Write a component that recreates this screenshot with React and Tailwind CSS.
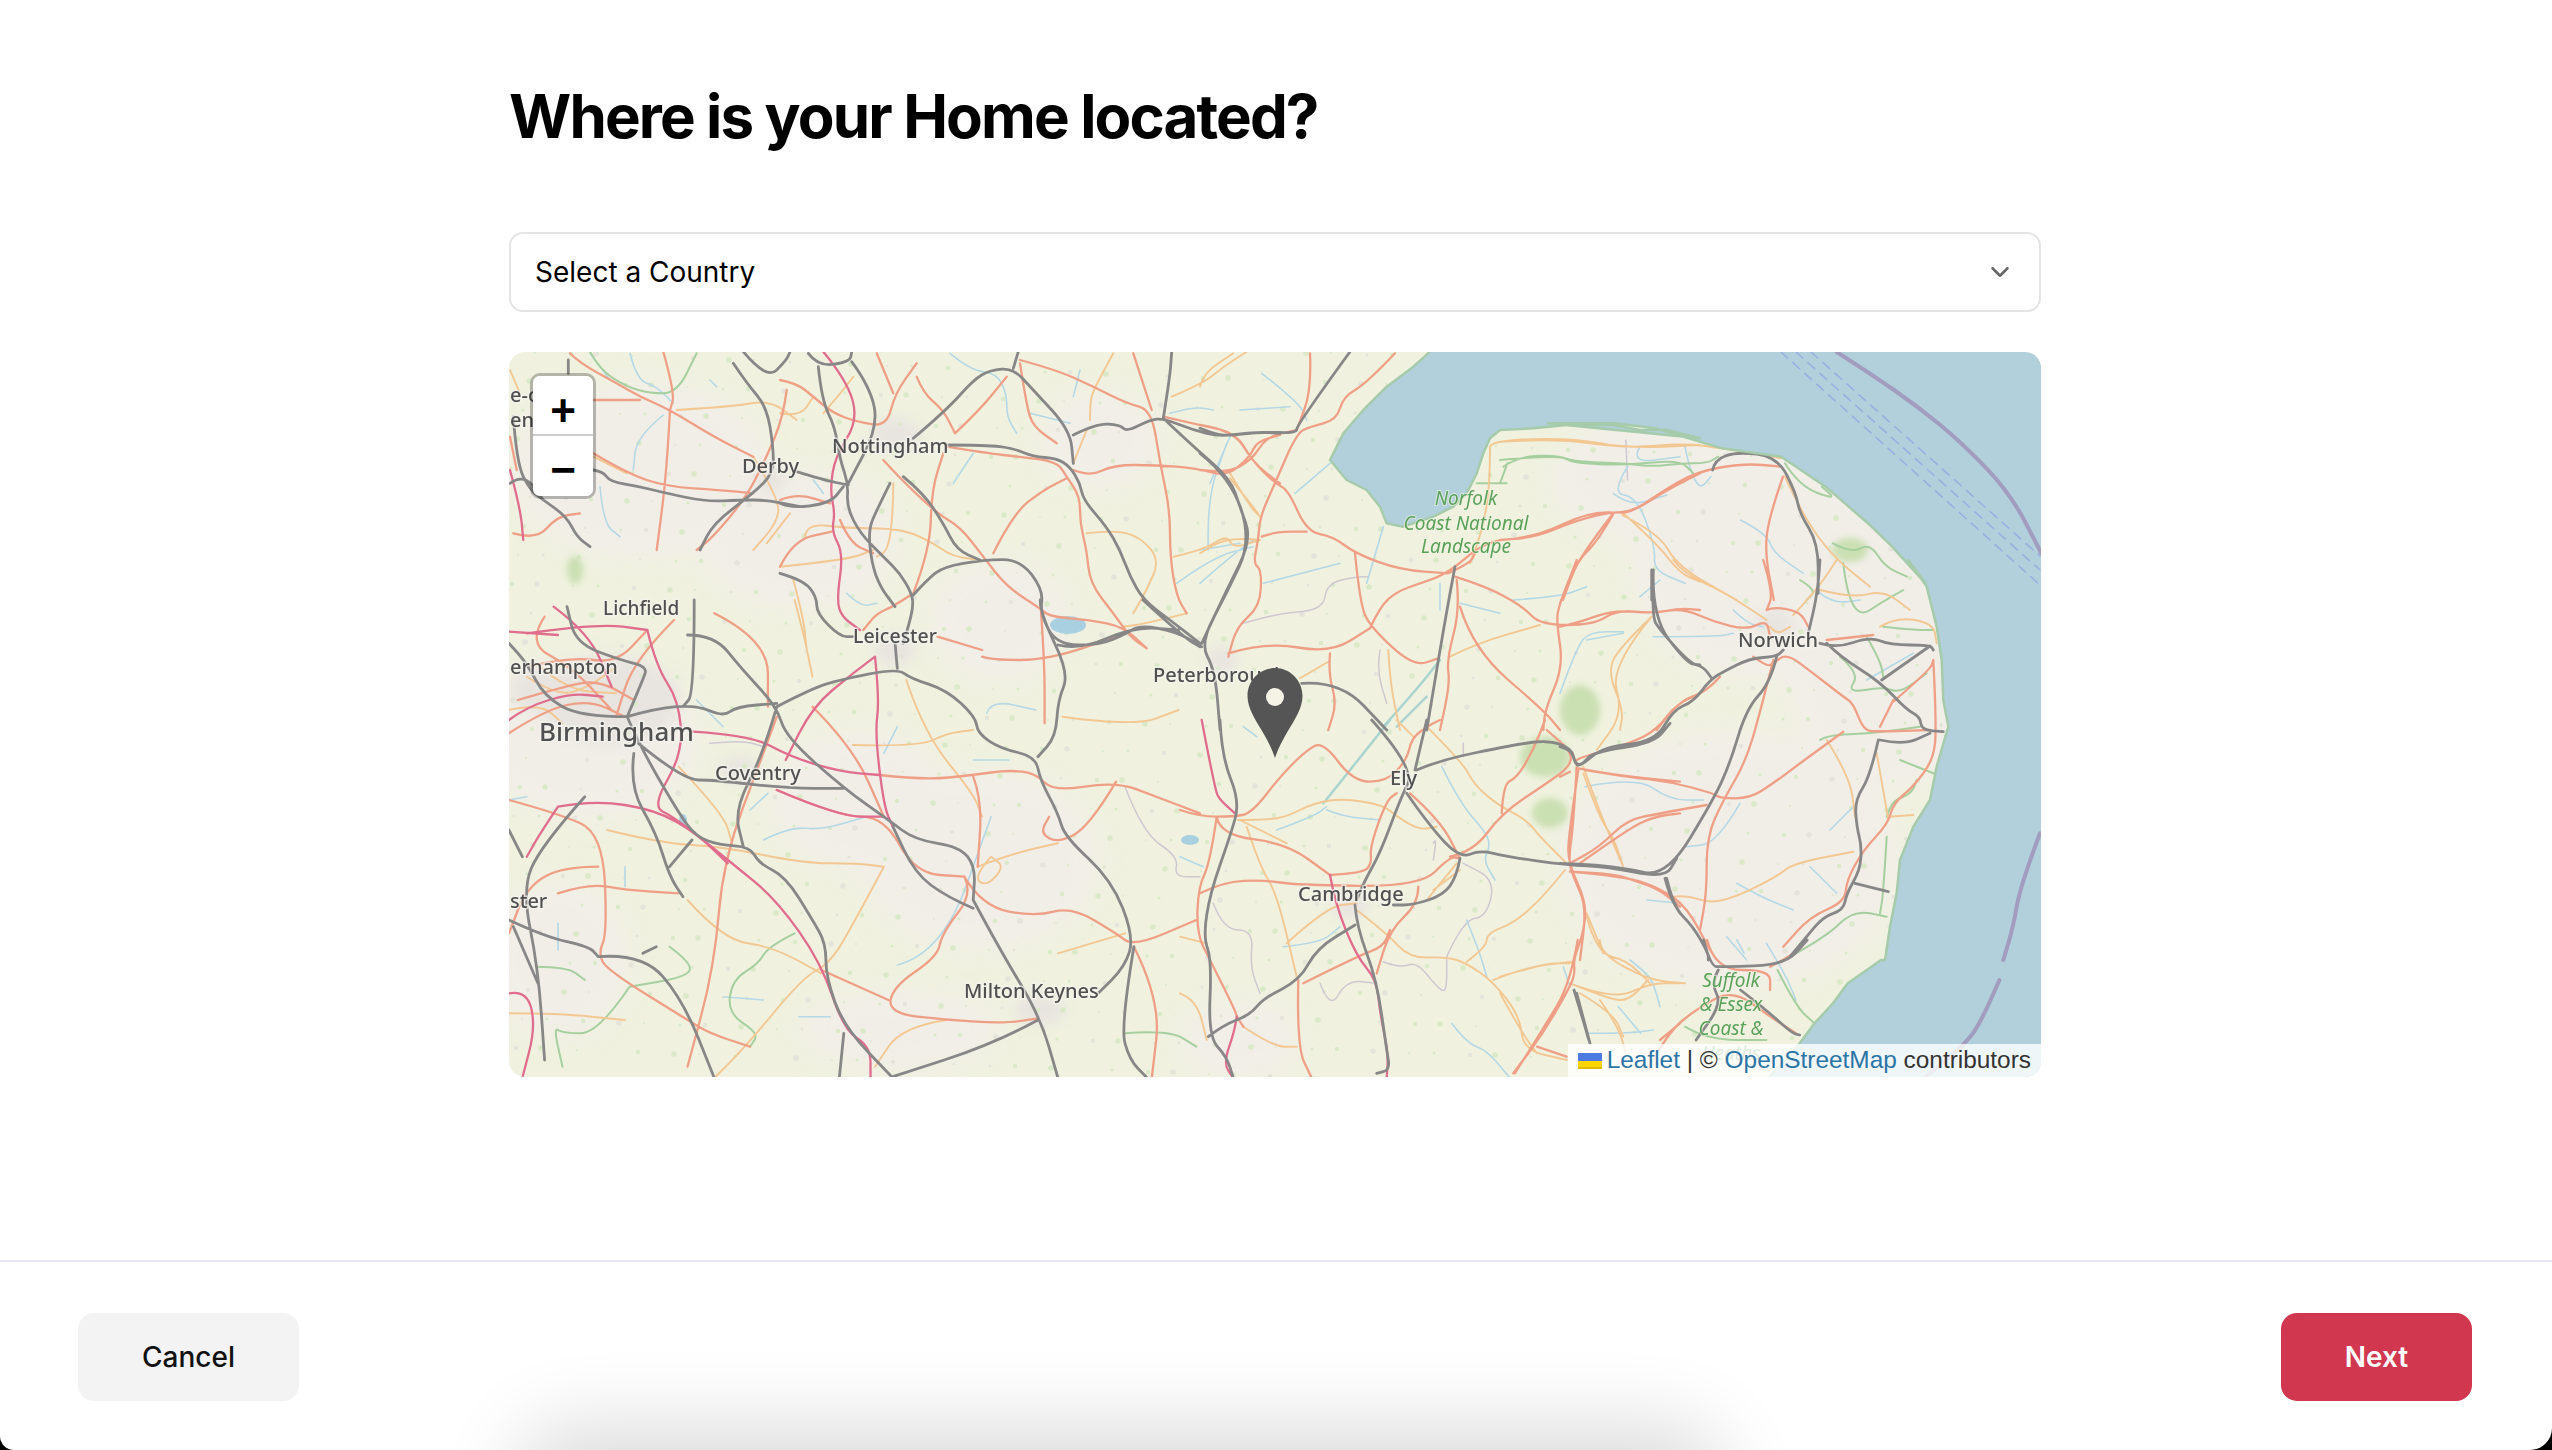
import { ChevronDown } from 'lucide-react';

// Road traces are noted in the coordinates of the crop they were read from,
// then mapped to page pixels (the svg viewBox is in page pixels).
const zones = [
  {
    at: [500, 350, 3, 3],
    water: ['270,10 330,90', '390,10 410,90 470,110 520,160', '490,195 410,260 400,360', '300,410 310,520 360,560', '630,90 650,110'],
    orange: ['530,180 700,170 810,150 890,210', '280,320 380,370', '760,320 840,450 830,520 760,600', '30,60 60,130', '800,580 870,490'],
    red: ['210,10 240,40 350,100 420,140 510,180 640,260 760,320', '510,180 500,370 470,600', '280,150 420,150', '280,310 380,370 500,410 660,420 760,430', '490,5 525,130 510,180', '30,260 50,360', '40,550 110,570 170,500 240,490', '860,120 850,200 800,320 740,440 640,560 590,600'],
    pink: ['30,360 60,470 70,570'],
    grey: ['700,40 740,100 800,170 820,290 820,370 760,430 640,520 600,600', '280,360 310,365 330,395 420,410 500,430 620,455 720,450 800,450 900,470', '730,5 800,90 860,30 870,5', '40,200 50,340 90,420 130,450 200,500 230,560 270,590', '30,400 70,370 130,450', '205,30 205,70'],
    green: ['270,5 300,60 380,110 450,130 530,130 590,10'],
  },
  {
    at: [780, 350, 3, 3],
    water: ['520,400 580,310', '510,10 570,60 650,70 680,130 680,200 710,250', '750,190 870,220', '880,140 900,60', '1170,190 1240,170 1300,180', '1285,600 1280,450 1340,280', '1190,700 1300,620 1420,590', '1260,700 1350,620 1420,570', '200,730 240,770 290,760', '100,390 130,430'],
    orange: ['75,560 80,520 200,535 330,535 400,550 460,580 520,620 600,630', '0,650 200,630 280,600', '340,400 340,480 325,600 290,620', '920,550 1000,540 1080,560 1140,630 1100,720 1060,790', '1180,620 1270,600 1340,555 1360,595 1440,570', '930,210 930,160 940,120 1000,10', '1175,140 1270,100 1330,50 1400,5', '880,340 920,240', '1220,790 1100,820 1030,830', '0,190 60,200 100,140', '220,80 190,120 130,190', '40,690 70,800 80,900', '1350,385 1420,470 1440,500'],
    red: ['500,290 620,310 720,320 830,335 860,380 900,440 900,520 920,600 930,700 1000,790 1050,860 1100,895', '0,650 40,570 155,545', '400,730 450,600 455,420 490,310', '525,250 600,180 680,80', '410,80 430,130 490,180 525,250', '310,330 350,375 470,490 540,530 610,620 680,710 780,775 810,800 930,810 1030,830 1100,895', '640,610 700,490 790,420 860,385', '880,360 930,380 1000,345 1130,345 1250,355 1340,380 1410,320 1430,275 1500,255', '720,40 740,170 760,230 830,280', '720,30 830,60 940,110 1040,160 1115,180 1140,340 1170,480 1170,620 1190,740 1220,790', '1060,10 1115,180', '1150,200 1280,230 1370,250 1420,340 1500,400', '400,730 340,770 290,790 250,840', '0,90 50,100 100,140 160,190 230,215 320,230 345,130 410,40', '290,10 340,130', '180,510 210,580 280,610', '0,450 50,430 150,460'],
    pink: ['130,5 200,90 235,210 165,320 150,420 165,490 155,545 190,610 170,750 185,800 240,840'],
    grey: ['115,50 125,150 165,230 180,330 205,400 200,470 240,550 310,620 360,670 395,730 400,770 385,830 370,880', '500,285 620,285 700,295 760,320 830,325 870,350 900,400 910,450 980,530 1020,600 1050,680 1090,750 1170,810 1260,880', '400,265 500,180 580,90 630,60 700,55 760,120 870,240 880,340', '880,255 950,220 1020,225 1040,245 1110,210 1150,205 1240,240 1320,260 1430,245 1500,250', '1150,205 1170,80 1175,5', '1150,205 1240,290 1350,385 1380,470 1415,570 1340,720 1265,880', '700,55 715,5', '0,460 30,475 150,460 190,410', '50,365 130,390 205,405', '400,735 440,690 490,650 610,630 720,628 790,720 780,790 830,885 960,885 1040,850 1080,825 1190,845 1265,890', '370,380 430,430 490,520 530,600 600,630', '330,400 290,480 265,540 275,640 300,710 345,770', '85,10 115,50 210,35 215,5', '0,670 70,690 110,740 110,790 180,860 220,860', '215,35 270,110 295,230 205,400'],
  },
  {
    at: [500, 600, 2.24, 3],
    water: ['1090,340 1100,300 1200,330', '890,380 860,460', '1060,480 1140,480', '590,720 650,680 720,690 820,650', '890,1095 990,1060 1100,650', '130,970 130,1050', '280,800 280,860', '500,1190 590,1200', '670,1250 740,1250', '20,600 60,590', '440,300 500,380', '560,630 600,580'],
    orange: ['660,0 680,100 700,230', '910,240 950,400 1060,580 1080,650', '790,435 940,440 1000,400 1060,390', '240,690 360,730 500,740 680,790 800,790 860,800', '860,800 800,950 740,1090 680,1130 550,1340 480,1434', '420,900 500,1020 610,1040 720,1120', '1000,1260 900,1280 840,1400', '1070,800 1150,760 1250,730', '1250,1060 1400,1000', '1260,350 1420,380 1520,330', '20,1240 130,1240 280,1260', '90,200 150,270 260,280', '400,500 500,640 520,730', '1100,770 1060,830 1090,860 1130,800 1100,770', '60,230 130,290 200,260 260,200', '20,330 90,310 140,370'],
    red: ['850,525 950,540 1060,525 1140,510 1200,520 1240,575 1380,545 1470,590 1568,640', '620,570 760,650 860,650 930,820 1040,830', '1040,830 1060,880 990,1000 980,1070 880,1160 870,1240 1000,1260 1130,1270 1205,1255', '1380,545 1320,680 1250,730 1210,700 1230,650', '1040,830 1080,920 1200,950 1280,920 1380,1000 1420,1040 1560,960', '620,350 590,460 500,780 480,1100 420,1400', '130,880 200,850 280,870 400,880', '20,600 130,640 230,700 240,1000 220,1060 240,1110 420,1260 470,1300 560,1340', '720,1110 870,1200', '1060,530 1080,600 1070,800', '1210,0 1220,180 1220,370', '1080,170 1100,180 1230,180 1400,100', '980,110 1080,150', '700,320 790,440 860,650', '480,40 600,120 600,320', '20,400 100,330 200,300 280,350', '100,50 60,130 160,200 250,330', '390,60 300,180 260,350', '1420,1040 1480,1200 1460,1434', '220,800 140,800 60,860 20,1000', '60,200 160,170 260,190 330,90', '40,300 140,260 220,240 300,300'],
    pink: ['330,90 350,200 400,300 410,460 340,620 390,650 520,790 620,900 720,1090 770,1290 830,1340 830,1434', '840,170 790,220 700,320 640,480', '840,170 850,300 840,400 860,620 880,680', '430,395 560,405 650,470 760,515 850,525', '60,100 220,70 330,90', '130,620 210,600 350,630 440,700 510,790', '20,95 130,105', '130,620 90,700 60,770', '20,1180 60,1170 80,1280 50,1434', '620,570 760,650 860,650', '20,360 60,320 160,280 230,290', '120,20 200,100 250,260'],
    grey: ['420,105 480,105 540,205 620,320 640,410 770,565 870,660 930,720 1030,740 1065,800 1060,900', '620,320 700,265 760,240 890,205 920,235 1000,270 1065,350 1070,400 1120,445 1200,470 1210,540 1250,640 1265,710 1370,840 1420,1010 1400,1100 1340,1180', '1440,0 1530,110 1568,140', '285,350 350,325 440,315 500,350 530,320 620,310', '1210,0 1210,40 1275,220 1250,300 1245,410 1205,470', '1250,135 1300,150 1420,80 1520,90', '890,205 885,130', '285,350 310,430 400,640 440,710 490,735 560,740 580,790 640,830 700,960 730,1030 730,1130 770,1280 880,1434', '310,430 410,540 480,540 640,565 770,565', '285,350 180,350 100,290 60,190 20,130', '285,350 320,240 330,200 270,180 170,130 150,20', '435,0 435,280 410,320', '300,460 290,560 350,700 380,830 410,890', '430,720 380,800', '190,590 90,740 50,870 85,1100 100,1380', '220,1070 320,1060 410,1200 480,1434', '20,960 100,1010 200,1040 220,1070', '320,1060 350,1040', '1060,900 1120,1050 1210,1250 1250,1434', '1205,1260 1110,1330 880,1430', '620,320 590,460 525,630 545,740', '1060,925 1000,890 930,820 880,680', '1420,1040 1390,1280 1410,1380 1450,1434', '760,1434 770,1300', '20,690 50,770', '30,980 85,1150'],
    green: ['660,1000 600,1040 580,1090 520,1140 510,1240 580,1300 560,1340', '290,1160 220,1300 140,1300 120,1280 140,1400', '80,1100 150,1100 190,1140', '380,1040 430,1090 420,1130 290,1160', '1400,1300 1500,1290 1560,1340'],
    bound: ['1400,560 1440,700 1520,770 1510,830 1568,830', '470,430 540,420 590,440'],
  },
  {
    at: [1200, 350, 3, 3],
    water: ['185,70 300,160 320,210', '120,180 270,170', '30,400 90,260', '285,430 390,340', '500,700 550,530', '190,700 420,640', '0,600 120,580', '1240,430 1290,470 1400,435', '720,780 720,700', '780,760 900,790', '940,750 1080,740 1160,710', '1160,870 1270,850', '1320,290 1290,340 1440,320'],
    orange: ['180,570 85,560 0,610', '90,370 150,470 180,500', '750,920 830,880 1020,825', '870,290 880,270 1120,265 1280,295 1500,285', '565,900 570,1000 600,1140', '300,985 385,935', '1270,490 1370,580 1440,670 1500,695', '1355,800 1250,900 1225,970 1270,1080 1260,1140', '0,110 10,70 100,10', '870,290 870,400 850,530 810,640'],
    red: ['585,10 500,100 430,140 410,210 330,230 290,250 225,400 180,500 175,570 160,640 185,660 180,770 110,830 85,920', '0,225 100,240 155,330 225,400 265,420 320,545 400,560 465,610 600,660 745,670', '0,360 80,370 155,330 200,260 290,240', '185,560 225,545 320,545', '465,610 480,760 510,830 640,950 715,925', '85,910 200,875 390,910 510,835', '390,910 385,970 410,1060 385,1140', '510,835 540,770 590,725 660,700 745,670 860,570 1000,565 1130,510 1240,485 1290,490 1400,420 1500,370', '1240,490 1130,630 1075,770 1070,820 1090,950 1035,1080 1030,1140', '765,680 860,710 970,770 1020,825 1180,825 1250,780 1360,790 1440,775 1500,780', '770,690 780,780 740,930 750,1000 720,1140', '780,770 820,900 1030,1080 1080,1140', '745,670 810,640 825,610', '1370,1140 1430,1060 1500,1030', '330,10 335,120 290,240'],
    grey: ['450,5 290,225 290,250 180,245 70,260 0,235', '0,310 90,380 155,570 80,730 0,880 45,960 60,1140', '765,650 740,780 680,1140', '305,1000 420,992 560,1140', '1360,660 1355,800 1460,940 1500,945'],
    green: ['920,400 830,400', '910,350 950,320 1080,315 1120,340 1280,345 1440,330 1480,370'],
    bound: ['130,820 230,790 370,780 380,700 470,680 505,680', '540,900 530,960 560,1060'],
    canal: ['550,1130 640,1030 720,930', '590,1130 680,1040'],
  },
  {
    at: [1500, 200, 2.703, 3],
    water: ['345,800 300,880 370,890 420,1040 415,1110 500,1150', '650,960 720,1000 740,1060 820,1120', '500,740 510,800 540,870 570,830'],
    orange: ['0,725 150,715 340,745 500,730 600,745 760,775', '330,945 430,1000 480,1100 640,1200', '770,830 820,950 900,1070 1000,1160'],
    red: ['0,1020 90,1015 240,935 355,940 430,880 530,815 660,790 760,800', '765,830 730,940 715,1050 740,1200', '305,945 260,1030 210,1080 170,1200'],
    grey: ['575,810 580,780 640,755 750,770 800,880 810,940 860,1030 860,1180', '410,1110 410,1200'],
    green: ['0,780 150,765 200,785 340,790 410,800 490,790 560,790 590,770', '0,850 20,790', '770,790 810,860 910,900 870,860', '900,1030 950,1060 1000,1030 1040,1100 1100,1130'],
    bound: ['340,720 345,840'],
  },
  {
    at: [1180, 720, 3, 3],
    water: ['290,330 400,290 440,260', '440,270 490,290 600,300', '310,680 420,670 480,620', '785,140 840,250 920,340 930,380 910,420 945,480', '860,600 900,700 920,770', '1150,740 1170,800', '1350,720 1400,760 1420,790 1440,860', '815,910 860,970 920,990 990,1074', '1220,940 1340,940 1420,930', '1400,540 1500,550', '0,410 70,440', '190,20 230,50'],
    orange: ['175,300 260,300 320,290 400,250 490,235 610,255 650,290 720,330 770,320', '180,300 320,370', '200,320 240,440 290,520 350,770', '320,670 440,560 530,550', '530,570 620,640 690,715 800,710 860,730 940,785 1020,890 1030,990 1160,1020', '860,725 920,680 920,640 1000,610 1080,540 1155,450', '940,780 1040,740 1180,725', '1170,790 1300,840 1410,790 1500,790', '1210,160 1260,300 1300,350 1330,440', '1220,590 1250,700 1340,720 1410,790', '740,20 850,130 880,190 945,250 1040,300 1080,350 1160,430', '760,510 840,450', '740,540 830,430', '1200,820 1300,880 1330,950', '0,650 80,670', '0,820 50,840 80,960', '190,920 280,980 350,980', '650,0 700,50'],
    red: ['0,270 60,290 160,290 215,280 300,170 380,90 430,65 520,185 620,185 680,120 695,55 740,20 780,0', '110,290 120,345 320,370 450,465', '110,290 90,430 55,500 50,640 90,720 165,870 170,890 190,920', '60,520 130,485 250,480 350,495 720,500 810,410 840,415', '450,465 550,460 575,430 570,380 620,240 650,220', '715,500 715,550 630,630 590,760', '370,790 530,710 610,680 630,630', '355,780 350,980 395,1074', '810,410 880,395 965,280 1100,190 1170,140 1175,95 1100,30', '965,280 970,190 1010,175 1060,90 1095,0', '1195,150 1165,350 1165,430 1220,550 1210,640 1180,720 1185,760 1170,800 1090,940 1000,1060', '1170,455 1290,460 1360,480 1440,510 1500,560', '1195,145 1300,165 1500,185', '1200,430 1340,330 1420,290 1500,280', '690,220 780,300 840,415', '1440,960 1500,910'],
    pink: ['65,0 105,210 120,240 165,280', '450,465 465,550 530,710 590,780 600,880 625,1000 620,1074', '170,890 165,930 130,1030 160,1074'],
    grey: ['120,0 125,110 180,245 150,350 90,520 70,650 95,720 85,950 140,1010 160,1074', '85,950 130,915 210,885 250,835 360,780 410,685 525,615', '525,555 530,620 590,780 620,990 630,1050 590,1060', '710,150 780,120 1000,75 1105,60 1175,85 1185,130 1205,135 1240,95 1420,70 1470,10', '575,0 705,145 660,240 600,400 555,480 530,540', '740,0 705,150', '680,220 750,320 840,415 900,390 980,410 1160,435 1280,440 1455,475 1490,415', '1455,475 1470,530 1500,580', '840,415 830,470 790,525 700,555 640,555', '1190,820 1230,970'],
    bound: ['850,70 850,110', '100,550 130,630 220,630 210,740 240,820', '420,790 450,870 500,780 590,790', '610,725 660,745 710,725 770,800 800,820 800,710', '800,710 850,600 920,590 945,480 850,430', '760,370 770,350 760,420'],
    canal: ['630,0 510,150 430,250'],
  },
  {
    at: [1560, 560, 3, 3],
    water: ['0,400 50,260 90,215 190,215', '240,110 300,60', '520,150 560,190 610,200', '540,730 470,850 380,860', '810,810 880,740', '280,230 470,230 520,220', '75,680 230,650 330,720 430,720', '750,920 830,1000', '530,970 600,1010 700,1050', '500,1130 560,1200', '780,100 820,130 900,120', '920,360 1060,280'],
    orange: ['340,0 370,40 500,100 620,180', '275,170 150,320 190,460 110,570', '70,620 120,760 190,920', '800,540 870,650 885,770', '950,580 980,750 985,780', '985,770 1060,765', '340,1010 380,1005 450,1030 530,1010 650,950 700,910 880,875', '80,1060 130,1180', '700,165 770,90 830,0', '780,90 880,115 970,90 1050,150', '960,200 1010,170 1120,190 1130,250', '630,200 650,225 690,200'],
    red: ['0,200 50,190 160,150 270,160 370,145 460,185 560,210 620,180 630,230', '620,150 640,140 720,155 745,200', '610,0 640,100 620,150', '580,290 620,320 640,310 680,280 760,340 850,410 880,430 910,510 950,515 1110,510', '480,350 440,395 350,430 290,510 210,550 70,590 50,600', '640,300 610,420 560,600 490,720 440,830 440,1000 420,1110', '75,630 200,650 330,665 460,700 480,715 570,715 640,670 720,610 850,515', '440,735 300,760 200,780 120,860 30,910', '50,620 40,800 25,900 40,950 80,1040 60,1200', '30,935 200,950 300,985 380,1040 450,1170', '0,650 30,635', '1000,420 960,500', '1000,425 1110,330 1120,300', '1120,300 1130,500 1120,600 1060,680 1000,730 985,790 910,870 860,960 855,1025 750,1070 670,1160', '50,0 0,130', '800,240 940,225'],
    green: ['720,60 770,90 740,120', '850,10 860,100 900,170 960,130 1030,90', '920,230 960,300 970,350', '840,290 900,340 860,400 970,380 1020,400 1100,340', '780,540 800,525 940,520 1080,500', '1020,600 1120,640', '980,830 970,1000 960,1060', '690,1190 800,1130 880,1050 980,1070', '970,200 1060,210 1120,210', '1070,660 1060,700 1000,720 980,770'],
    grey: ['0,560 35,570 45,610 60,620 130,560 285,545 340,450 400,425 450,360 490,335 570,295 650,290 670,270', '280,30 275,170 300,210 390,310 430,320 455,355', '780,0 775,90 745,220', '650,290 630,370 560,445 510,610 460,720 320,950 190,925 110,915 0,910', '320,955 340,1040 400,1100 445,1180 445,1200', '780,250 830,265 930,230 990,255 1110,255 1120,270', '1110,258 965,360', '800,250 840,290 960,365 1040,450 1080,470 1085,510 1150,515', '960,540 1030,555 1110,520', '955,540 930,650 885,720 890,800 905,860 900,930 860,1000 850,1050 790,1070 740,1130 690,1190', '885,970 985,995'],
  },
  {
    at: [1500, 940, 2.703, 3],
    water: ['720,10 770,100 800,180', '640,0 660,40', '320,200 380,280'],
    orange: ['0,110 120,70 190,70', '270,0 270,40 400,120 500,130', '190,130 300,180 350,180 400,120', '0,160 60,280 100,340', '270,180 320,260 340,340'],
    red: ['210,0 190,130 120,260 40,400', '560,0 580,90 730,90 730,150', '730,80 800,40 830,0', '400,390 450,280 540,200 630,150 730,230 800,280', '100,320 180,350'],
    grey: ['550,0 570,80 600,80 770,75 830,0', '200,150 230,260 240,300', '650,150 720,210 790,280 810,285', '590,90 570,130 600,190 530,300'],
    green: ['750,90 800,200 850,250', '500,260 560,300 720,300'],
  },
];

function toPoints(trace, [ox, oy, sx, sy]) {
  return trace.split(' ').map((pair) => {
    const [x, y] = pair.split(',').map(Number);
    return [ox + x / sx, oy + y / sy];
  });
}

// quadratic through the midpoints, roads look less like a polygon this way
function smooth(pts) {
  let d = `M${pts[0][0].toFixed(1)} ${pts[0][1].toFixed(1)}`;
  for (let i = 1; i < pts.length - 1; i++) {
    const mx = (pts[i][0] + pts[i + 1][0]) / 2;
    const my = (pts[i][1] + pts[i + 1][1]) / 2;
    d += `Q${pts[i][0].toFixed(1)} ${pts[i][1].toFixed(1)} ${mx.toFixed(1)} ${my.toFixed(1)}`;
  }
  const last = pts[pts.length - 1];
  return `${d}L${last[0].toFixed(1)} ${last[1].toFixed(1)}`;
}

function layer(name) {
  return zones.flatMap((z) => (z[name] || []).map((t) => smooth(toPoints(t, z.at)))).join('');
}

const coastZones = [
  [[1200, 350, 3, 3], '690,5 640,50 560,110 490,180 430,250 390,330 440,390 500,420 540,470 560,520 610,530 700,500 760,470 800,430 830,370 850,310 870,265 900,240 1000,235 1100,225 1240,225 1320,240 1400,240 1500,265'],
  [[1500, 200, 2.703, 3], '130,670 310,670 420,685 600,745 760,770 880,860 1000,975 1060,1040 1150,1150'],
  [[1560, 560, 3, 3], '1045,0 1100,80 1130,200 1145,300 1150,420 1165,500 1130,620 1110,720 1060,800 1020,900 1010,1000 990,1100 975,1200'],
  [[1500, 940, 2.703, 3], '1030,60 940,130 900,190 850,250 810,310 720,420'],
];
const coast = coastZones.flatMap(([at, t]) => toPoints(t, at));
const coastLine = coast.map((p) => p.join(',')).join(' ');
const sea = `${coastLine} 2041,1077 2041,352`;

const shippingLane = [
  [[1500, 200, 2.703, 3], '910,456 1000,520 1130,620 1250,730 1380,880 1463,1060'],
  [[1560, 560, 3, 3], '1440,820 1380,980 1360,1100 1330,1200'],
  [[1500, 940, 2.703, 3], '1350,120 1300,250 1250,320 1150,410'],
].map(([at, t]) => smooth(toPoints(t, at))).join('');

// fixed pseudo random so the field speckle is the same on every load
const specks = Array.from({ length: 1100 }, (_, i) => ({
  x: 510 + ((i * 7919) % 1531),
  y: 352 + ((i * 104729) % 725),
  r: 1 + (i % 4) * 0.6,
}));

const grayPatches = [
  [1760, 560, 130, 120], [1890, 640, 110, 150], [1730, 860, 170, 130], [1640, 480, 90, 60],
  [640, 470, 130, 90], [590, 740, 110, 80], [980, 860, 120, 90], [1100, 440, 60, 50],
  [860, 800, 90, 70], [1000, 620, 70, 60], [560, 960, 70, 80], [1240, 1040, 60, 40],
  [800, 540, 100, 70], [900, 1030, 100, 40],
];

const cities = [
  [610, 700, 70, 45], [540, 690, 30, 25], [895, 435, 25, 18], [895, 650, 22, 16], [740, 770, 20, 14],
  [1222, 660, 16, 14], [1775, 625, 18, 16], [1350, 905, 18, 14], [770, 480, 16, 14], [1040, 1010, 26, 16],
];

const greenPatches = [
  [1545, 757, 25, 20], [1550, 813, 18, 15], [1580, 710, 20, 25], [575, 570, 8, 14], [1850, 550, 18, 12],
];

const lakes = [
  [1068, 625, 18, 9], [1190, 840, 9, 5], [683, 820, 4, 6],
];

const labels = [
  { t: 'e-o', x: 510, y: 402, s: 20 },
  { t: 'ent', x: 510, y: 427, s: 20 },
  { t: 'Nottingham', x: 832, y: 453, s: 20 },
  { t: 'Derby', x: 742, y: 473, s: 20 },
  { t: 'Lichfield', x: 603, y: 615, s: 19 },
  { t: 'Leicester', x: 853, y: 643, s: 19.5 },
  { t: 'erhampton', x: 510, y: 674, s: 20 },
  { t: 'Birmingham', x: 539, y: 741, s: 26 },
  { t: 'Coventry', x: 715, y: 780, s: 20 },
  { t: 'ster', x: 510, y: 908, s: 20 },
  { t: 'Milton Keynes', x: 964, y: 998, s: 20 },
  { t: 'Peterborough', x: 1153, y: 682, s: 20 },
  { t: 'Ely', x: 1390, y: 785, s: 20 },
  { t: 'Cambridge', x: 1298, y: 901, s: 20 },
  { t: 'Norwich', x: 1738, y: 647, s: 20 },
];

const parkLabels = [
  { t: 'Norfolk', x: 1466, y: 505 },
  { t: 'Coast National', x: 1466, y: 530 },
  { t: 'Landscape', x: 1466, y: 553 },
  { t: 'Suffolk', x: 1731, y: 987 },
  { t: '& Essex', x: 1731, y: 1011 },
  { t: 'Coast &', x: 1731, y: 1035 },
  { t: 'Heaths', x: 1731, y: 1060 },
];

function MapDrawing() {
  return (
    <svg viewBox="509 352 1532 725" className="block w-full h-full bg-[#f0f2df]">
      <g className="blur-[14px]">
        {grayPatches.map(([x, y, w, h], i) => (
          <ellipse key={i} cx={x} cy={y} rx={w} ry={h} fill="#f1eee8" />
        ))}
      </g>
      <g className="blur-[6px]">
        {cities.map(([x, y, w, h], i) => (
          <ellipse key={i} cx={x} cy={y} rx={w} ry={h} fill="#e8e5e0" />
        ))}
      </g>
      <g className="blur-[0.6px]">
        {specks.map((p, i) => (
          <circle key={i} cx={p.x} cy={p.y} r={p.r} fill={i % 3 === 0 ? '#e4e4da' : '#dae9c8'} />
        ))}
      </g>
      <g className="blur-[3px]">
        {greenPatches.map(([x, y, w, h], i) => (
          <ellipse key={i} cx={x} cy={y} rx={w} ry={h} fill="#cadfb2" />
        ))}
      </g>
      <g className="blur-[0.7px]" fill="none" strokeLinejoin="round" strokeLinecap="round">
        <path d={layer('bound')} stroke="#cfc8d2" strokeWidth="1.5" />
        <path d={layer('water')} stroke="#b4d8e6" strokeWidth="1.6" />
        <path d={layer('canal')} stroke="#a9d4cf" strokeWidth="2.5" />
        {lakes.map(([x, y, w, h], i) => (
          <ellipse key={i} cx={x} cy={y} rx={w} ry={h} fill="#a9d0e0" />
        ))}
        <path d={layer('green')} stroke="#a6cf9f" strokeWidth="2" />
        <path d={layer('orange')} stroke="#f3c792" strokeWidth="1.9" />
        <path d={layer('red')} stroke="#ef9f85" strokeWidth="2.3" />
        <path d={layer('pink')} stroke="#e06c8e" strokeWidth="2.3" />
        <path d={layer('grey')} stroke="#878787" strokeWidth="2.8" />
      </g>
      <polygon points={sea} fill="#b1d0dc" />
      <polyline points={coastLine} fill="none" stroke="#a5cbab" strokeWidth="2.5" strokeLinejoin="round" />
      <g fill="none" strokeLinecap="round">
        <path d={shippingLane} stroke="#a29cbf" strokeWidth="4" />
        <path d="M1781 352L2040 585M1796 352L2040 570M1811 352L2040 556" stroke="#98afe0" strokeWidth="1.6" strokeDasharray="9 7" />
      </g>
      <g className="blur-[0.4px] font-['Noto_Sans',sans-serif] font-medium [paint-order:stroke]" fill="#505050" stroke="#f4f3ee" strokeOpacity="0.7" strokeWidth="3">
        {labels.map((l) => (
          <text key={l.t} x={l.x} y={l.y} fontSize={l.s}>{l.t}</text>
        ))}
      </g>
      <g className="blur-[0.3px] font-['Noto_Sans',sans-serif] italic [paint-order:stroke]" fill="#5aa25a" stroke="#f1f2e2" strokeOpacity="0.6" strokeWidth="2" textAnchor="middle" fontSize="19">
        {parkLabels.map((l) => (
          <text key={l.t} x={l.x} y={l.y}>{l.t}</text>
        ))}
      </g>
      <path
        transform="translate(1247.5 668)"
        fill="#555555"
        d="M27.5 0C12.3 0 0 12.5 0 28C0 40 8 52 14 62C20 72 25 82 27.5 90C30 82 35 72 41 62C47 52 55 40 55 28C55 12.5 42.7 0 27.5 0Z"
      />
      <circle cx="1275" cy="697" r="9" fill="#f4f3e6" />
    </svg>
  );
}

function ZoomControl() {
  return (
    <div className="absolute left-[21px] top-[21px] w-[66px] rounded-[10px] border-[3px] border-black/25 bg-clip-padding">
      <div className="flex h-[60px] items-center justify-center rounded-t-[7px] border-b-2 border-[#cccccc] bg-white pt-[12px] font-['Liberation_Sans',sans-serif] text-[44px] font-bold leading-none text-black">+</div>
      <div className="flex h-[60px] items-center justify-center rounded-b-[7px] bg-white pt-[8px] font-['Liberation_Sans',sans-serif] text-[44px] font-bold leading-none text-black">−</div>
    </div>
  );
}

function Attribution() {
  return (
    <div className="absolute bottom-0 right-0 flex h-[33px] items-center bg-white/80 px-[10px] font-['Liberation_Sans',sans-serif] text-[24.4px] leading-none text-[#333333]">
      <svg viewBox="0 0 12 8" className="mr-[5px] h-[16px] w-[24px]">
        <path fill="#4C7BE1" d="M0 0h12v4H0z" />
        <path fill="#FFD500" d="M0 4h12v3H0z" />
        <path fill="#E0BC00" d="M0 7h12v1H0z" />
      </svg>
      <span>
        <span className="text-[#2b75a6]">Leaflet</span> | © <span className="text-[#2b75a6]">OpenStreetMap</span> contributors
      </span>
    </div>
  );
}

export default function App() {
  return (
    <div className="h-[1450px] w-[2552px] bg-black font-['Inter',sans-serif]">
      <div className="relative flex h-full flex-col overflow-hidden rounded-bl-[14px] rounded-br-[22px] bg-white">
        <main className="ml-[509px] flex h-[1260px] w-[1532px] flex-col">
          <h1 className="mt-[80px] text-[60px] font-bold leading-[72px] tracking-[-0.031em] text-black">
            Where is your Home located?
          </h1>
          <div className="mt-[80px] flex h-[80px] items-center justify-between rounded-[14px] border-2 border-[#e4e4e4] pl-[24px] pr-[24px]">
            <span className="text-[28px] text-black">Select a Country</span>
            <ChevronDown className="h-[30px] w-[30px] text-[#666666]" strokeWidth={2} />
          </div>
          <div className="relative mt-[40px] h-[725px] overflow-hidden rounded-[16px]">
            <MapDrawing />
            <ZoomControl />
            <Attribution />
          </div>
        </main>
        <footer className="flex flex-1 items-start justify-between border-t-2 border-[#e8e6ef] pl-[78px] pr-[80px] pt-[51px]">
          <button className="flex h-[88px] w-[221px] items-center justify-center rounded-[16px] bg-[#f3f3f3] text-[28px] font-medium text-[#111111]">
            Cancel
          </button>
          <button className="flex h-[88px] w-[191px] items-center justify-center rounded-[16px] bg-[#d1374f] text-[28px] font-semibold text-white">
            Next
          </button>
        </footer>
        <div className="absolute bottom-[-60px] left-[560px] h-[40px] w-[1120px] rounded-full shadow-[0_0_80px_45px_rgba(0,0,0,0.14)]" />
      </div>
    </div>
  );
}
